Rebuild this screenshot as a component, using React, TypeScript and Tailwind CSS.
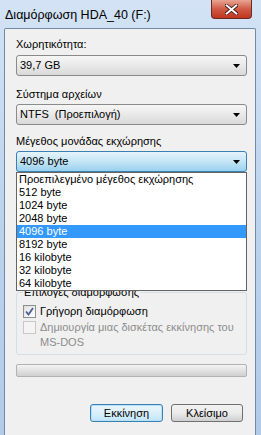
import React from "react";

function Arrow() {
  return (
    <svg width="7" height="4" viewBox="0 0 7 4" className="block">
      <path d="M0 0h7L3.5 4z" fill="#000" />
    </svg>
  );
}

function Combo({ text, hot }: { text: string; hot?: boolean }) {
  return (
    <div
      className={
        hot
          ? "h-[21px] flex items-center justify-between pl-[3px] pr-[6px] rounded-[3px] border border-[#3c7fb1] bg-gradient-to-b from-[#e5f4fc] via-[#c4e5f6] to-[#98d1ef]"
          : "h-[21px] flex items-center justify-between pl-[3px] pr-[6px] rounded-[3px] border border-[#8a8a8a] bg-gradient-to-b from-[#f6f6f6] via-[#e9e9e9] to-[#d9d9d9]"
      }
    >
      <span className="leading-[15px] whitespace-pre">{text}</span>
      <Arrow />
    </div>
  );
}

const items = [
  "Προεπιλεγμένο μέγεθος εκχώρησης",
  "512 byte",
  "1024 byte",
  "2048 byte",
  "4096 byte",
  "8192 byte",
  "16 kilobyte",
  "32 kilobyte",
  "64 kilobyte",
];

export default function App() {
  return (
    <div className="w-[261px] h-[435px] overflow-hidden flex flex-col bg-gradient-to-b from-[#d3e3f5] via-[#bcd3ed] to-[#b2cbe8] font-['Liberation_Sans',Arial,sans-serif] text-[11px] text-black">
      {/* title bar */}
      <div className="h-[28px] flex items-start justify-between shrink-0">
        <div className="pl-[5px] pt-[7px] text-[12.5px] leading-[16px]">Διαμόρφωση HDA_40 (F:)</div>
        <div className="mr-[9px] w-[41px] h-[19px] rounded-b-[4px] border border-t-0 border-[#6b2a22] bg-gradient-to-b from-[#e8a493] via-[#cf5a44] to-[#c0341f] flex items-center justify-center">
          <svg width="13" height="11" viewBox="0 0 13 11">
            <path
              d="M1 1l11 9M12 1L1 10"
              stroke="#3b1510"
              strokeWidth="3.6"
              strokeLinecap="round"
            />
            <path
              d="M1.5 1.3l10 8.4M11.5 1.3l-10 8.4"
              stroke="#ffffff"
              strokeWidth="2"
              strokeLinecap="round"
            />
          </svg>
        </div>
      </div>
      {/* client area */}
      <div className="ml-[4px] mr-[5px] flex-1 border border-b-0 border-[#7189a5] rounded-t-[2px] bg-[#f0f0f0] pl-[11px] pr-[8px] pt-[8px] flex flex-col">
        <div className="h-[15px] leading-[15px]">Χωρητικότητα:</div>
        <div className="mt-[3px]">
          <Combo text="39,7 GB" />
        </div>
        <div className="mt-[11px] h-[15px] leading-[15px]">Σύστημα αρχείων</div>
        <div className="mt-[2px]">
          <Combo text="NTFS  (Προεπιλογή)" />
        </div>
        <div className="mt-[9px] h-[15px] leading-[15px]">Μέγεθος μονάδας εκχώρησης</div>
        <div className="mt-[2px] relative z-10">
          <Combo text="4096 byte" hot />
          <div className="absolute left-0 right-0 top-full border border-[#646464] bg-white">
            {items.map((t, i) => (
              <div
                key={t}
                className={
                  i === 4
                    ? "h-[13px] leading-[13px] pl-[2px] bg-[#3399ff] text-white"
                    : "h-[13px] leading-[13px] pl-[2px]"
                }
              >
                {t}
              </div>
            ))}
          </div>
        </div>
        <fieldset className="mt-[113px] border border-[#d5dfe5] rounded-[3px] pl-[6px] pr-[2px] pb-[4px]">
          <legend className="h-[15px] leading-[15px] px-[1px]">Επιλογές διαμόρφωσης</legend>
          <div className="mt-[4px] flex items-start">
            <div className="mt-[1px] w-[13px] h-[13px] border border-[#8e8f8f] bg-gradient-to-br from-[#dcdcdc] to-[#ffffff] p-[1px] shrink-0">
              <div className="w-full h-full bg-gradient-to-br from-[#e6e6e6] to-[#fbfbfb] flex items-center justify-center">
                <svg width="9" height="9" viewBox="0 0 9 9">
                  <path d="M1 4.5l2.5 3L8 1" stroke="#4a5f97" strokeWidth="1.8" fill="none" />
                </svg>
              </div>
            </div>
            <span className="ml-[4px] leading-[15px]">Γρήγορη διαμόρφωση</span>
          </div>
          <div className="mt-[1px] flex items-start">
            <div className="mt-[1px] w-[13px] h-[13px] border border-[#c8c8c8] bg-[#f4f4f4] shrink-0" />
            <span className="ml-[4px] leading-[15px] text-[#8d8d8d]">
              Δημιουργία μιας δισκέτας εκκίνησης του
              <br />
              MS-DOS
            </span>
          </div>
        </fieldset>
        <div className="mt-[9px] h-[13px] rounded-[2px] border border-[#b2b2b2] bg-gradient-to-b from-[#f3f3f3] via-[#e2e2e2] to-[#d0d0d0]" />
        <div className="mt-[27px] flex justify-end gap-[8px] pr-[4px]">
          <button className="w-[73px] h-[18px] rounded-[3px] border border-[#3c7fb1] bg-gradient-to-b from-[#eaf6fd] via-[#dbeff9] to-[#bee6fd] leading-[14px] shadow-[inset_0_0_0_1px_#b4e0f8]">
            Εκκίνηση
          </button>
          <button className="w-[72px] h-[18px] rounded-[3px] border border-[#707070] bg-gradient-to-b from-[#f2f2f2] via-[#ebebeb] to-[#cfcfcf] leading-[14px]">
            Κλείσιμο
          </button>
        </div>
      </div>
    </div>
  );
}
